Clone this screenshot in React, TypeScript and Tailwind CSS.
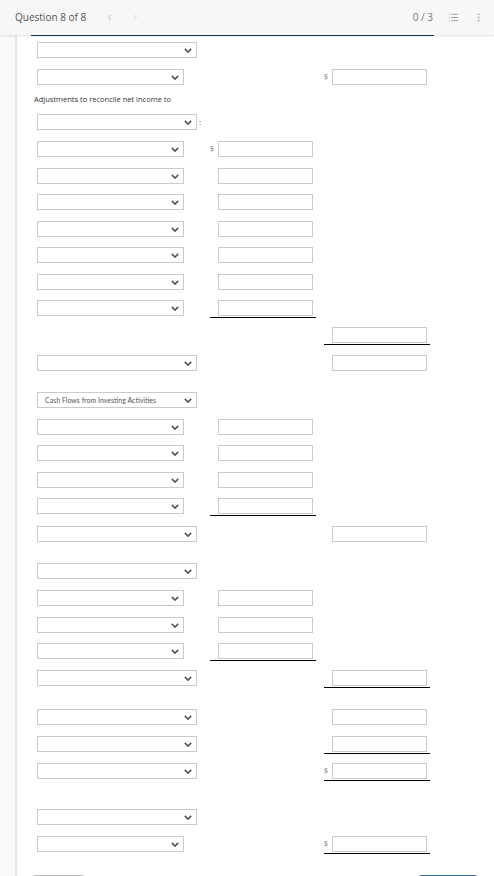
import React from "react";
import { List, EllipsisVertical, ChevronLeft, ChevronRight } from "lucide-react";

type Row = {
  mt: string;
  select?: "wide" | "narrow";
  label?: string;
  colon?: boolean;
  mid?: boolean;
  midDollar?: boolean;
  midLine?: boolean;
  right?: boolean;
  rightDollar?: boolean;
  rightLine?: boolean;
};

const rows: Row[] = [
  { mt: "mt-[6px]", select: "wide" },
  { mt: "mt-[11px]", select: "narrow", right: true, rightDollar: true },
  { mt: "mt-[10px]", select: "wide", colon: true },
  { mt: "mt-[11px]", select: "narrow", mid: true, midDollar: true },
  { mt: "mt-[11px]", select: "narrow", mid: true },
  { mt: "mt-[10px]", select: "narrow", mid: true },
  { mt: "mt-[11px]", select: "narrow", mid: true },
  { mt: "mt-[10px]", select: "narrow", mid: true },
  { mt: "mt-[11px]", select: "narrow", mid: true },
  { mt: "mt-[10px]", select: "narrow", mid: true, midLine: true },
  { mt: "mt-[9px]", right: true, rightLine: true },
  { mt: "mt-[10px]", select: "wide", right: true },
  { mt: "mt-[21px]", select: "wide", label: "Cash Flows from Investing Activities" },
  { mt: "mt-[11px]", select: "narrow", mid: true },
  { mt: "mt-[10px]", select: "narrow", mid: true },
  { mt: "mt-[11px]", select: "narrow", mid: true },
  { mt: "mt-[10px]", select: "narrow", mid: true, midLine: true },
  { mt: "mt-[10px]", select: "wide", right: true },
  { mt: "mt-[21px]", select: "wide" },
  { mt: "mt-[11px]", select: "narrow", mid: true },
  { mt: "mt-[11px]", select: "narrow", mid: true },
  { mt: "mt-[10px]", select: "narrow", mid: true, midLine: true },
  { mt: "mt-[9px]", select: "wide", right: true, rightLine: true },
  { mt: "mt-[21px]", select: "wide", right: true },
  { mt: "mt-[11px]", select: "wide", right: true, rightLine: true },
  { mt: "mt-[9px]", select: "wide", right: true, rightDollar: true, rightLine: true },
  { mt: "mt-[28px]", select: "wide" },
  { mt: "mt-[11px]", select: "narrow", right: true, rightDollar: true, rightLine: true },
];

function Chevron() {
  return (
    <svg width="8" height="5" viewBox="0 0 10 6" className="shrink-0">
      <path d="M1 1l4 4 4-4" fill="none" stroke="#555" strokeWidth="2" />
    </svg>
  );
}

function Select({ wide, label }: { wide: boolean; label?: string }) {
  return (
    <div
      className={`${wide ? "w-[160px]" : "w-[147px]"} flex h-4 items-center justify-between border border-[#cacaca] bg-white pl-[7px] pr-[4px]`}
    >
      <span className="font-['Lato',sans-serif] text-[7px] text-[#555]">{label}</span>
      <Chevron />
    </div>
  );
}

function Cell({ show, dollar, line }: { show?: boolean; dollar?: boolean; line?: boolean }) {
  if (!show) return <div className="w-[106px] shrink-0" />;
  return (
    <div
      className={`flex w-[106px] shrink-0 items-start ${line ? "border-b border-black pb-[1px]" : ""}`}
    >
      <span className="flex h-4 w-[8px] items-center text-[7px] text-[#777]">{dollar ? "$" : ""}</span>
      <div className="h-4 w-[95px] border border-[#cacaca] bg-white" />
    </div>
  );
}

function FormRow({ r }: { r: Row }) {
  return (
    <div className={`${r.mt} flex items-start pl-[20px]`}>
      <div className="flex w-[173px] shrink-0 items-center">
        {r.select && <Select wide={r.select === "wide"} label={r.label} />}
        {r.colon && <span className="ml-[2px] text-[8px] text-[#444]">:</span>}
      </div>
      <Cell show={r.mid} dollar={r.midDollar} line={r.midLine} />
      <div className="w-[8px] shrink-0" />
      <Cell show={r.right} dollar={r.rightDollar} line={r.rightLine} />
    </div>
  );
}

export default function App() {
  return (
    <div className="h-[876px] w-full overflow-hidden bg-white font-['Open_Sans',sans-serif]">
      <div className="relative z-10 flex h-[35px] items-center bg-[#f7f7f7] pl-[15px] pr-[10px] shadow-[0_1px_2px_rgba(0,0,0,0.12)]">
        <span className="text-[10px] text-[#555]">Question 8 of 8</span>
        <ChevronLeft size={9} className="ml-[19px] text-[#999]" />
        <ChevronRight size={9} className="ml-[17px] text-[#ccc]" />
        <span className="ml-auto text-[10px] text-[#777]">0 / 3</span>
        <List size={11} className="ml-[15px] text-[#999]" />
        <EllipsisVertical size={11} className="ml-[14px] text-[#aaa]" />
      </div>
      <div className="flex h-full">
        <div className="w-[17px] shrink-0 border-r-2 border-[#e8e8e8] bg-[#fafafa]" />
        <div className="flex-1">
          <div className="ml-[14px] h-px w-[403px] bg-[#12325a]" />
          {rows.slice(0, 2).map((r, i) => (
            <FormRow key={i} r={r} />
          ))}
          <p className="ml-[17px] mt-[9px] h-[10px] text-[7.5px] leading-[10px] text-[#333]">
            Adjustments to reconcile net income to
          </p>
          {rows.slice(2).map((r, i) => (
            <FormRow key={i + 2} r={r} />
          ))}
          <div className="ml-[14px] mt-[21px] flex w-[447px] justify-between">
            <button aria-label="Save for Later" className="h-[30px] w-[55px] rounded-sm border border-[#bbb] bg-white" />
            <button aria-label="Submit Answer" className="h-[30px] w-[60px] rounded-sm bg-[#2b6c9e]" />
          </div>
        </div>
      </div>
    </div>
  );
}
